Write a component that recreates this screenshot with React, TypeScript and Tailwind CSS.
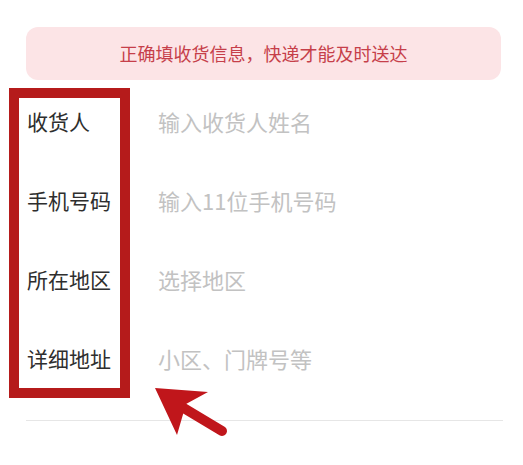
const rows = [
  { label: "收货人", placeholder: "输入收货人姓名" },
  { label: "手机号码", placeholder: "输入11位手机号码" },
  { label: "所在地区", placeholder: "选择地区" },
  { label: "详细地址", placeholder: "小区、门牌号等" },
];

export default function App() {
  return (
    <div
      className="relative w-[523px] h-[465px] bg-white overflow-hidden"
      style={{ fontFamily: '"Noto Sans CJK SC", "Noto Sans", sans-serif' }}
    >
      {/* 提示条 */}
      <div className="ml-[26px] mr-[22px] mt-[27px] h-[53px] rounded-[12px] bg-[#fce4e6] flex items-center justify-center text-[18px] text-[#c63f4a]">
        正确填收货信息，快递才能及时送达
      </div>

      {/* 表单 */}
      <div className="pt-[2px]">
        {rows.map((r) => (
          <div key={r.label} className="h-[79px] flex items-center px-[27px]">
            <div className="w-[131px] shrink-0 text-[21px] text-[#2e2e2e]">{r.label}</div>
            <div className="text-[22px] text-[#c2c2c2]">{r.placeholder}</div>
          </div>
        ))}
      </div>

      <div className="ml-[26px] mr-[20px] mt-[22px] border-t border-[#e6e6e6]" />

      {/* 标注框 */}
      <div className="absolute left-[9px] top-[88px] w-[121px] h-[310px] border-[10px] border-[#b51b1b]" />

      {/* 标注箭头 */}
      <svg className="absolute left-0 top-0" width="523" height="465" viewBox="0 0 523 465">
        <line x1="172" y1="401" x2="222" y2="431" stroke="#c0161b" strokeWidth="10" strokeLinecap="round" />
        <polygon points="155,388 208,392 186,404 177,435" fill="#c0161b" />
      </svg>
    </div>
  );
}
